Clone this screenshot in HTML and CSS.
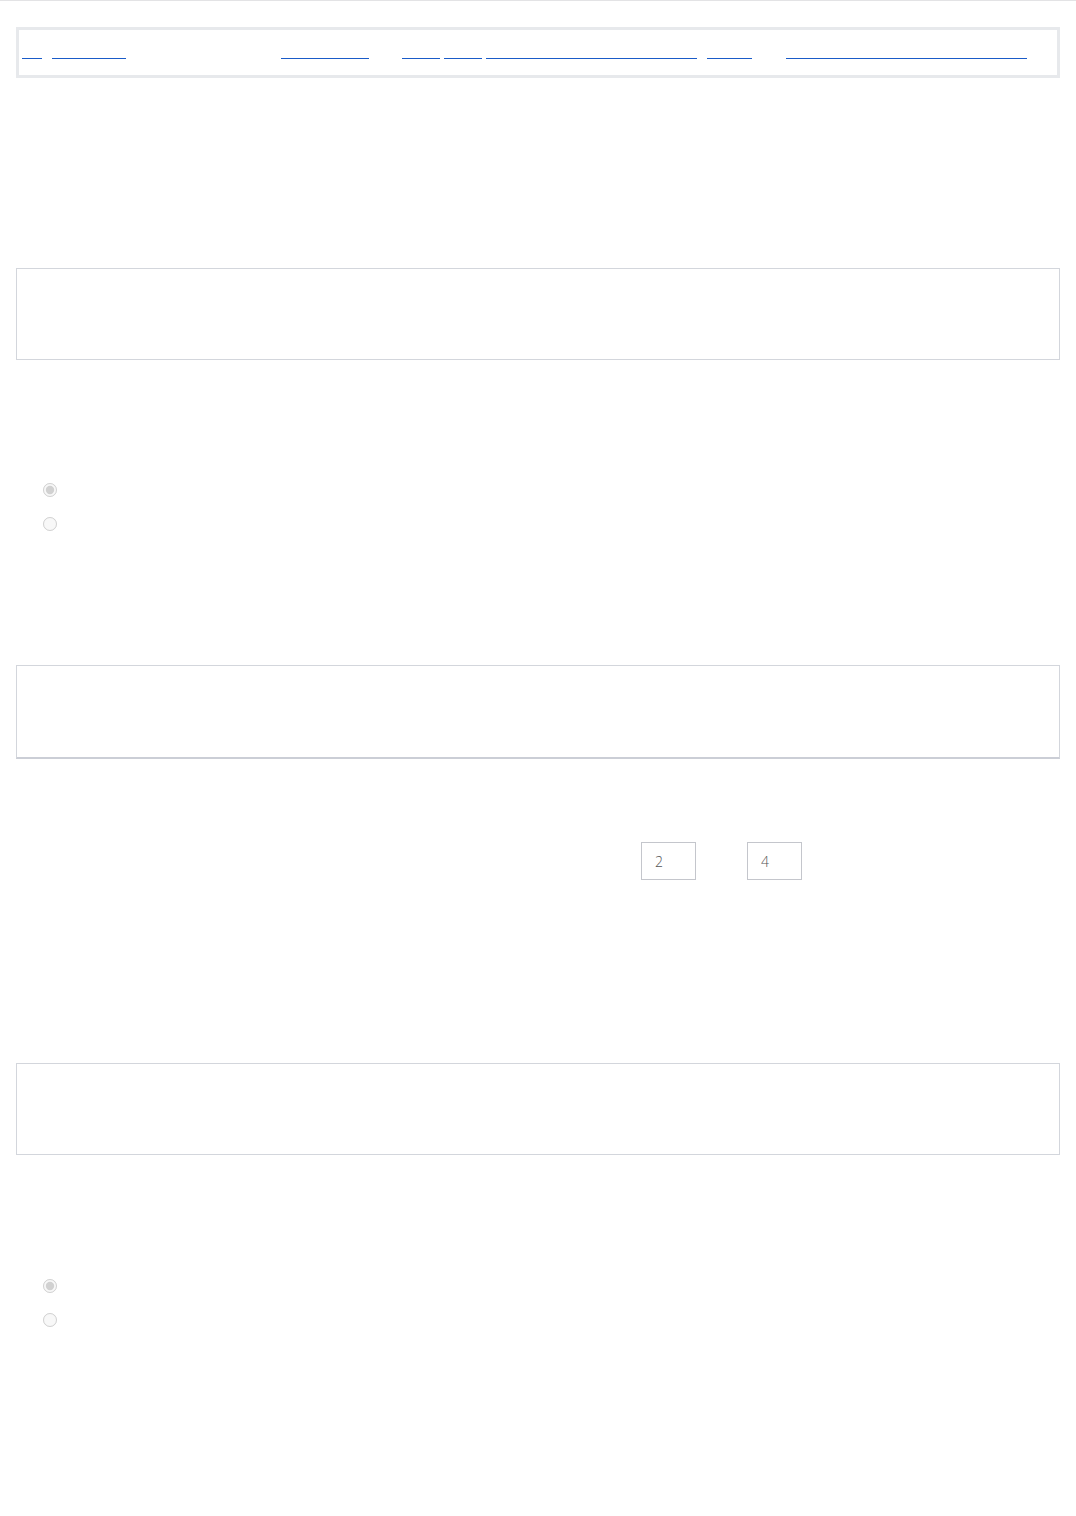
FILE: index.html
```html
<!DOCTYPE html>
<html lang="en">
<head>
<meta charset="utf-8">
<title>Form</title>
<link rel="stylesheet" href="styles.css">
</head>
<body>
<div class="topline"></div>
<main class="page">
  <nav class="nav">
    <a class="link l1" href="#">All</a>
    <a class="link l2" href="#">Products</a>
    <a class="link l3" href="#">Solutions</a>
    <a class="link l4" href="#">Docs</a>
    <a class="link l5" href="#">Blog</a>
    <a class="link l6" href="#">Customer stories</a>
    <a class="link l7" href="#">Help</a>
    <a class="link l8" href="#">Contact sales</a>
  </nav>

  <section class="box box-a"></section>

  <div class="radios radios-a">
    <label class="radio-row"><input type="radio" name="r1" checked disabled><span class="hidden-text">Option one</span></label>
    <label class="radio-row"><input type="radio" name="r1" disabled><span class="hidden-text">Option two</span></label>
  </div>

  <section class="box box-b"></section>

  <div class="range-row">
    <input class="num" type="text" value="2" readonly>
    <input class="num" type="text" value="4" readonly>
  </div>

  <section class="box box-c"></section>

  <div class="radios radios-c">
    <label class="radio-row"><input type="radio" name="r2" checked disabled><span class="hidden-text">Option one</span></label>
    <label class="radio-row"><input type="radio" name="r2" disabled><span class="hidden-text">Option two</span></label>
  </div>
</main>
</body>
</html>
```

FILE: styles.css
```css
html, body {
  margin: 0;
  padding: 0;
  background: #ffffff;
}

body {
  font-family: "Open Sans", "Liberation Sans", sans-serif;
  color: #ffffff;
  height: 1516px;
}

.topline {
  height: 1px;
  background: #e3e3e5;
}

.page {
  padding: 0 16px;
}

.nav {
  margin-top: 26px;
  border: 3px solid #e7e9ec;
  padding: 12px 3px 16px;
  display: flex;
  align-items: flex-start;
  height: 17px;
}

.link {
  display: block;
  height: 16px;
  overflow: hidden;
  white-space: nowrap;
  color: #ffffff;
  font-size: 10px;
  line-height: 16px;
  text-decoration: none;
  border-bottom: 1px solid #1a5bc8;
}

.l1 { width: 20px; }
.l2 { width: 74px; margin-left: 10px; }
.l3 { width: 88px; margin-left: 155px; }
.l4 { width: 38px; margin-left: 33px; }
.l5 { width: 38px; margin-left: 4px; }
.l6 { width: 211px; margin-left: 4px; }
.l7 { width: 45px; margin-left: 10px; }
.l8 { width: 241px; margin-left: 34px; }

.box {
  border: 1px solid #d3d6dc;
  box-sizing: border-box;
}

.box-a {
  margin-top: 190px;
  height: 92px;
}

.box-b {
  margin-top: 124px;
  height: 94px;
  border-bottom: 2px solid #cbced6;
}

.box-c {
  margin-top: 124px;
  height: 92px;
}

.radios {
  display: flex;
  flex-direction: column;
  padding-left: 26px;
}

.radios-a {
  margin-top: 113px;
}

.radios-c {
  margin-top: 114px;
}

.radio-row {
  display: flex;
  align-items: center;
  height: 34px;
  gap: 8px;
  font-size: 14px;
  color: #ffffff;
}

.radio-row input {
  margin: 0 0 0 1px;
  width: 14px;
  height: 14px;
}

.hidden-text {
  color: #ffffff;
}

.range-row {
  display: flex;
  gap: 51px;
  padding-left: 625px;
  margin-top: 83px;
  margin-bottom: 183px;
}

.num {
  box-sizing: border-box;
  width: 55px;
  height: 38px;
  margin: 0;
  border: 1px solid #c4c6cc;
  border-radius: 0;
  padding: 0 0 0 13px;
  font-family: "Open Sans", "Liberation Sans", sans-serif;
  font-weight: 300;
  font-size: 14px;
  color: #555555;
  background: #ffffff;
  outline: none;
}
```
